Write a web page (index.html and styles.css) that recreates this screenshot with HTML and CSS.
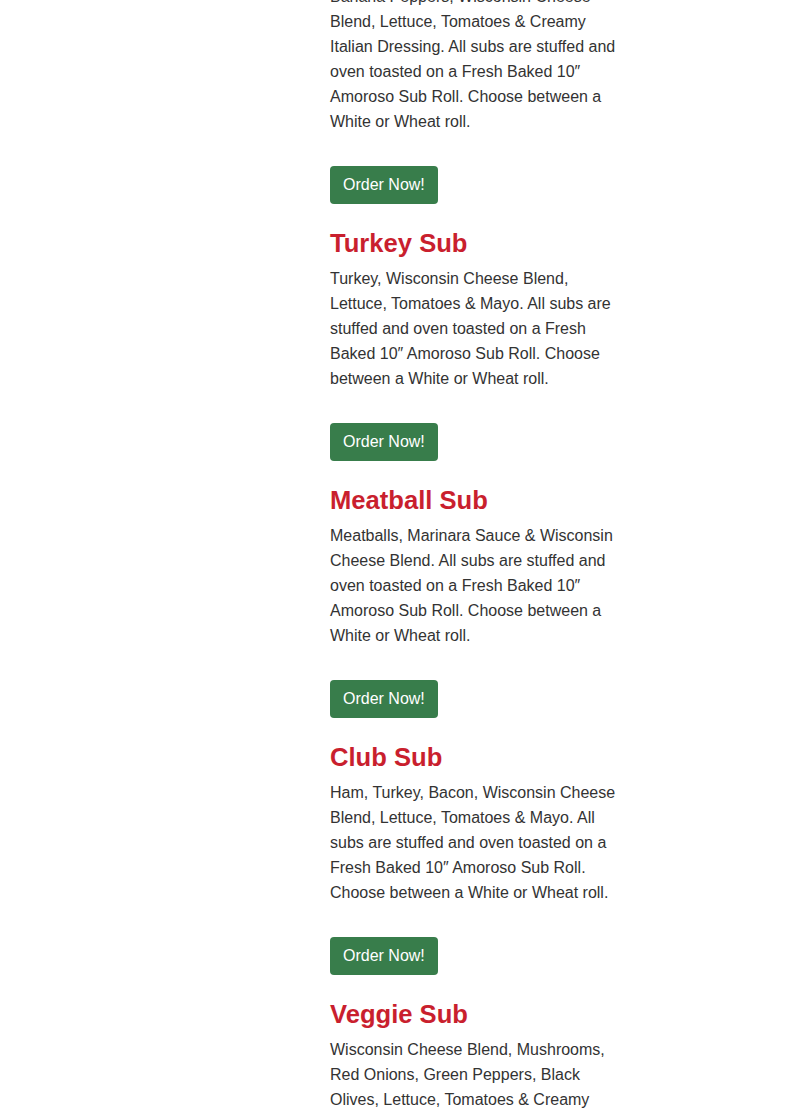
FILE: index.html
```html
<!DOCTYPE html>
<html lang="en">
<head>
<meta charset="utf-8">
<title>Subs</title>
<link rel="stylesheet" href="styles.css">
</head>
<body>
<div class="page">
  <div class="side"></div>
  <div class="menu">
    <div class="item">
      <p class="desc">Banana Peppers, Wisconsin Cheese Blend, Lettuce, Tomatoes &amp; Creamy Italian Dressing. All subs are stuffed and oven toasted on a Fresh Baked 10″ Amoroso Sub Roll. Choose between a White or Wheat roll.</p>
      <a class="btn" href="#">Order Now!</a>
    </div>
    <div class="item">
      <h3 class="title">Turkey Sub</h3>
      <p class="desc">Turkey, Wisconsin Cheese Blend, Lettuce, Tomatoes &amp; Mayo. All subs are stuffed and oven toasted on a Fresh Baked 10″ Amoroso Sub Roll. Choose between a White or Wheat roll.</p>
      <a class="btn" href="#">Order Now!</a>
    </div>
    <div class="item">
      <h3 class="title">Meatball Sub</h3>
      <p class="desc">Meatballs, Marinara Sauce &amp; Wisconsin Cheese Blend. All subs are stuffed and oven toasted on a Fresh Baked 10″ Amoroso Sub Roll. Choose between a White or Wheat roll.</p>
      <a class="btn" href="#">Order Now!</a>
    </div>
    <div class="item">
      <h3 class="title">Club Sub</h3>
      <p class="desc">Ham, Turkey, Bacon, Wisconsin Cheese Blend, Lettuce, Tomatoes &amp; Mayo. All subs are stuffed and oven toasted on a Fresh Baked 10″ Amoroso Sub Roll. Choose between a White or Wheat roll.</p>
      <a class="btn" href="#">Order Now!</a>
    </div>
    <div class="item">
      <h3 class="title">Veggie Sub</h3>
      <p class="desc">Wisconsin Cheese Blend, Mushrooms, Red Onions, Green Peppers, Black Olives, Lettuce, Tomatoes &amp; Creamy Italian Dressing. All subs are stuffed and oven toasted on a Fresh Baked 10″ Amoroso Sub Roll. Choose between a White or Wheat roll.</p>
      <a class="btn" href="#">Order Now!</a>
    </div>
  </div>
</div>
</body>
</html>
```

FILE: styles.css
```css
html, body {
  margin: 0;
  padding: 0;
  background: #ffffff;
}
body {
  font-family: "Liberation Sans", Arial, sans-serif;
  color: #333333;
  font-size: 16px;
  line-height: 25px;
  overflow: hidden;
}
.page {
  display: grid;
  grid-template-columns: 330px 290px;
  margin-top: -16.5px;
}
.menu {
  display: flex;
  flex-direction: column;
}
.item {
  display: flex;
  flex-direction: column;
  align-items: flex-start;
  margin-bottom: 23.5px;
}
.title {
  margin: 0 0 7px;
  font-size: 25.6px;
  line-height: 31px;
  font-weight: bold;
  color: #c91f2e;
}
.desc {
  margin: 0 0 32.5px;
}
.btn {
  display: inline-block;
  background: #387d4b;
  color: #ffffff;
  text-decoration: none;
  font-size: 16px;
  line-height: 24px;
  padding: 7px 13px;
  border-radius: 4px;
}
```
